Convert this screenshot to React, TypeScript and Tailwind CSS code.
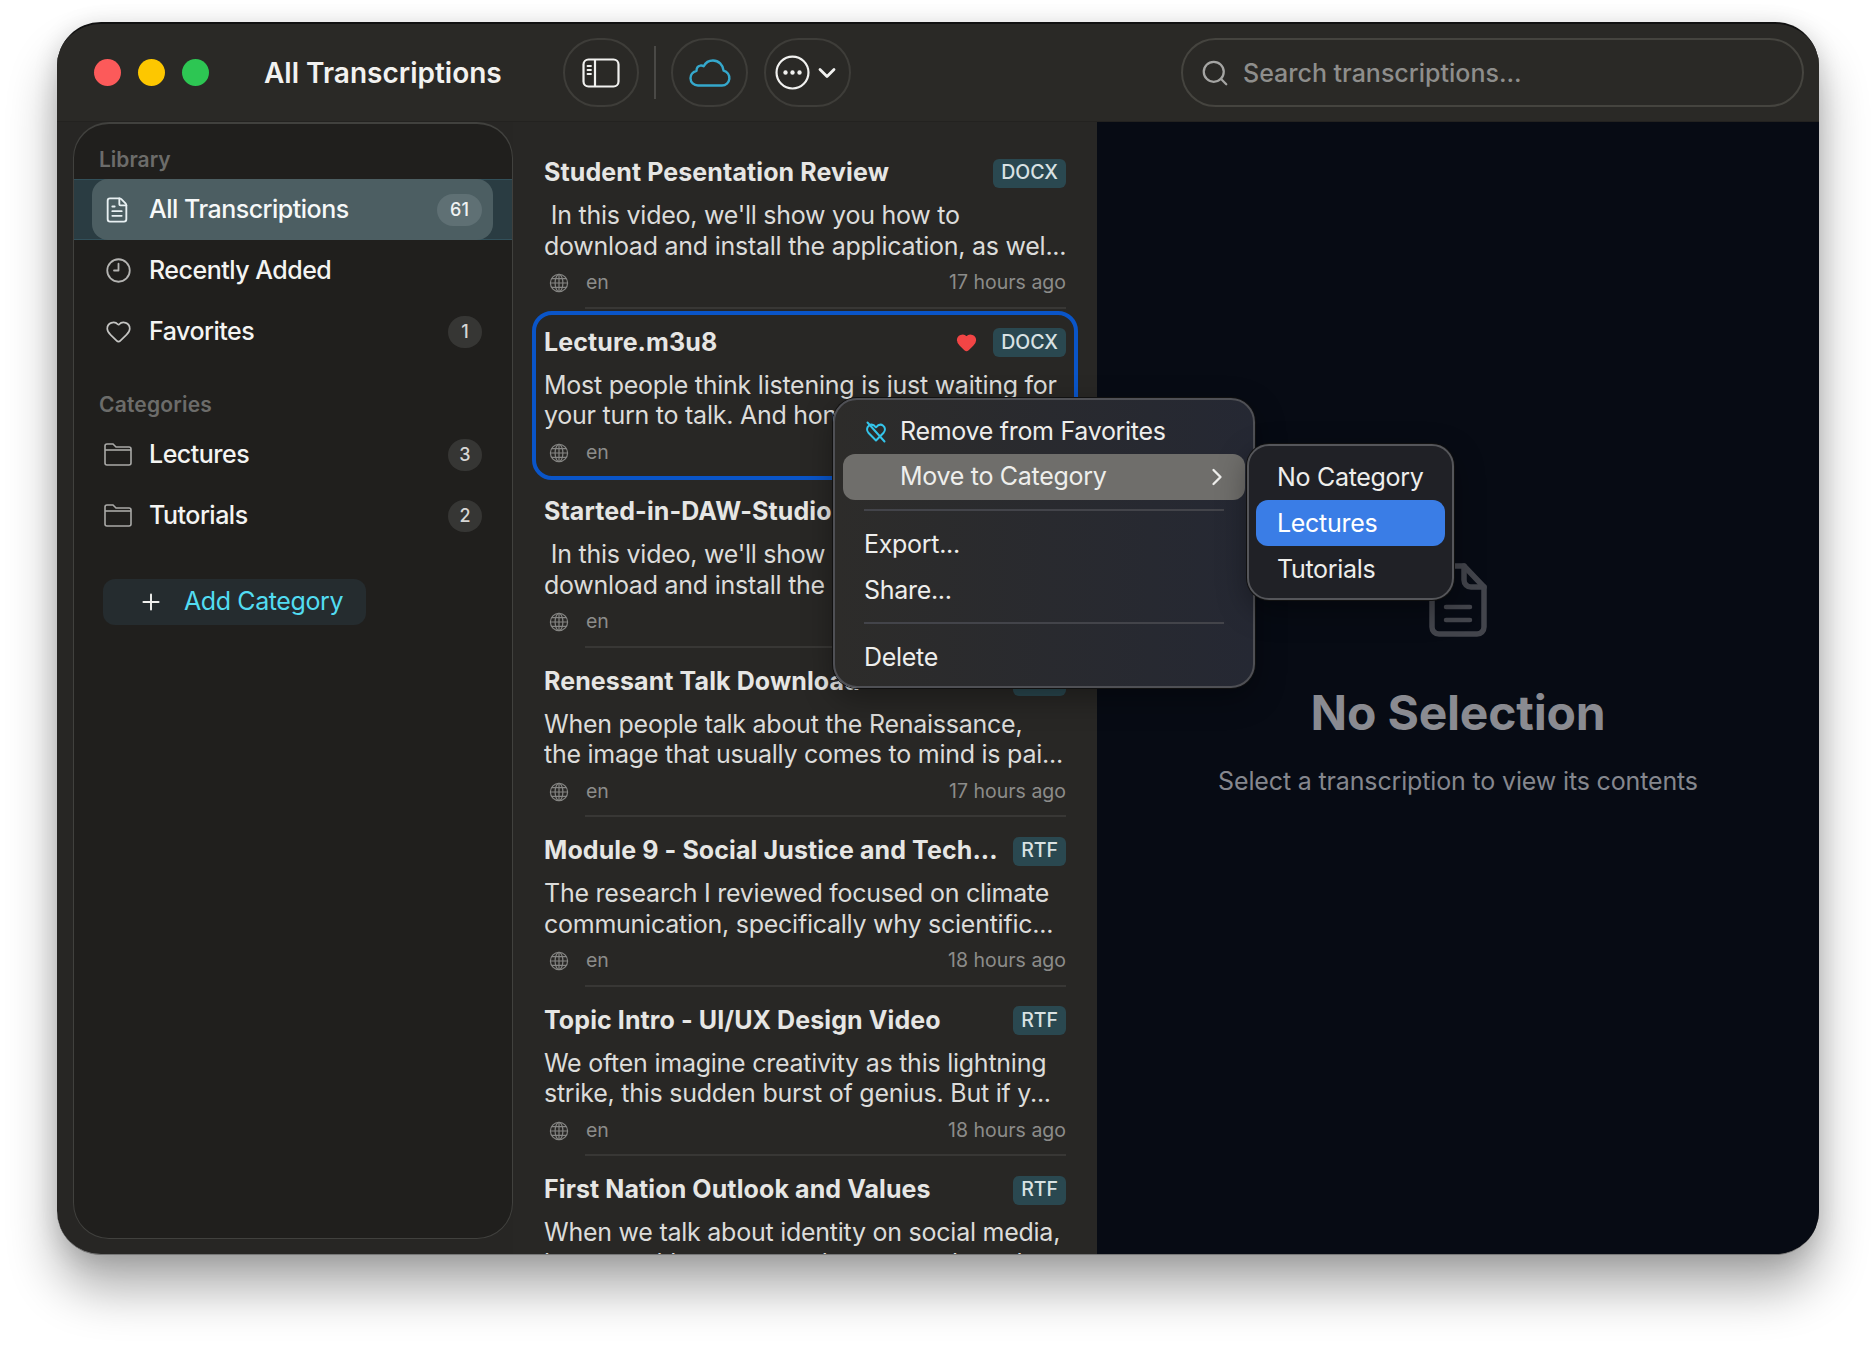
import React from 'react';
import { ChevronDown, ChevronRight, Clock9, FileText, Heart, Plus, Search } from 'lucide-react';

interface Transcription {
  title: string;
  format: string;
  text: string;
  age: string;
  favorite?: boolean;
  selected?: boolean;
}

const transcriptions: Transcription[] = [
  {
    title: 'Student Pesentation Review',
    format: 'DOCX',
    text: " In this video, we'll show you how to\ndownload and install the application, as wel...",
    age: '17 hours ago',
  },
  {
    title: 'Lecture.m3u8',
    format: 'DOCX',
    text: 'Most people think listening is just waiting for\nyour turn to talk. And honestly, most of us...',
    age: '17 hours ago',
    favorite: true,
    selected: true,
  },
  {
    title: 'Started-in-DAW-Studio',
    format: 'DOCX',
    text: " In this video, we'll show you how to\ndownload and install the application, as wel...",
    age: '17 hours ago',
  },
  {
    title: 'Renessant Talk Download',
    format: 'RTF',
    text: 'When people talk about the Renaissance,\nthe image that usually comes to mind is pai...',
    age: '17 hours ago',
  },
  {
    title: 'Module 9 - Social Justice and Tech...',
    format: 'RTF',
    text: 'The research I reviewed focused on climate\ncommunication, specifically why scientific...',
    age: '18 hours ago',
  },
  {
    title: 'Topic Intro - UI/UX Design Video',
    format: 'RTF',
    text: 'We often imagine creativity as this lightning\nstrike, this sudden burst of genius. But if y...',
    age: '18 hours ago',
  },
  {
    title: 'First Nation Outlook and Values',
    format: 'RTF',
    text: "When we talk about identity on social media,\nit starts with a presentation to people and...",
    age: '18 hours ago',
  },
];

const FolderIcon = () => (
  <svg width="28" height="23" viewBox="0 0 28 23" fill="none" stroke="#a9a9a7" strokeWidth="1.6">
    <path d="M1 5V3a2 2 0 0 1 2-2h6l3 3h13a2 2 0 0 1 2 2v14a2 2 0 0 1-2 2H3a2 2 0 0 1-2-2V5z" />
    <path d="M1 7h26" />
  </svg>
);

const GlobeIcon = () => (
  <svg width="20" height="20" viewBox="0 0 20 20" fill="none" stroke="#858583" strokeWidth="1.2">
    <circle cx="10" cy="10" r="8.6" />
    <ellipse cx="10" cy="10" rx="3.9" ry="8.6" />
    <path d="M10 1.4v17.2M1.4 10h17.2M2.6 5.7h14.8M2.6 14.3h14.8" />
  </svg>
);

const SidebarToggleIcon = () => (
  <svg width="38" height="30" viewBox="0 0 38 30" fill="none" stroke="#f1f1ef" strokeWidth="2.2" strokeLinecap="round">
    <rect x="1.5" y="1.5" width="35" height="27" rx="5" />
    <path d="M13 2v26" />
    <path d="M5.5 8h3.5M5.5 12h3.5M5.5 16h3.5" strokeWidth="1.8" />
  </svg>
);

const CloudIcon = () => (
  <svg width="42" height="28" viewBox="0 0 42 28" fill="none" stroke="#35a8cc" strokeWidth="2.4" strokeLinejoin="round">
    <path d="M9 26.5h24a7.5 7.5 0 0 0 1.6-14.8C34 6 29.6 1.5 24 1.5c-4.3 0-7.6 2.4-9.3 5.8-1.2-.7-2.3-.9-3.4-.6-2.4.5-3.8 2.6-3.8 5.1C3.8 12.9 1.5 16 1.5 19.2c0 4 3.3 7.3 7.5 7.3z" />
  </svg>
);

const MoreCircleIcon = () => (
  <svg width="35" height="35" viewBox="0 0 32 32" fill="none">
    <circle cx="16" cy="16" r="14.6" stroke="#f1f1ef" strokeWidth="2" />
    <circle cx="9.6" cy="16" r="2" fill="#f1f1ef" />
    <circle cx="16" cy="16" r="2" fill="#f1f1ef" />
    <circle cx="22.4" cy="16" r="2" fill="#f1f1ef" />
  </svg>
);

const HeartSlashIcon = () => (
  <svg width="22" height="22" viewBox="0 0 22 22" fill="none" stroke="#34c4ea" strokeWidth="2" strokeLinecap="round" strokeLinejoin="round">
    <path d="M11 19.5 3.6 12C1.4 9.7 1.6 6.4 3.8 4.7c2.1-1.6 5-1 7.2 1.6 2.2-2.6 5.1-3.2 7.2-1.6 2.2 1.7 2.4 5 .2 7.3L11 19.5z" />
    <path d="M2.5 1.5 19.5 20.5" />
  </svg>
);

const BigDocIcon = () => (
  <svg width="58" height="74" viewBox="0 0 58 74" fill="none" stroke="#43454c" strokeWidth="5.5" strokeLinecap="round" strokeLinejoin="round">
    <path d="M35 3H10a7 7 0 0 0-7 7v54a7 7 0 0 0 7 7h38a7 7 0 0 0 7-7V24L35 3z" />
    <path d="M35 3v14a7 7 0 0 0 7 7h13" />
    <path d="M17 44h24M17 57h24" strokeWidth="4.5" />
  </svg>
);

const CountBadge = ({ value, active }: { value: number; active?: boolean }) => (
  <span
    className={
      active
        ? 'flex h-[32px] w-[45px] items-center justify-center rounded-full bg-[#5f7074] text-[18px] font-medium text-[#f0f2f2]'
        : 'flex h-[32px] min-w-[34px] items-center justify-center rounded-full bg-[#363634] px-[10px] text-[18px] font-medium text-[#d6d6d4]'
    }
  >
    {value}
  </span>
);

const SidebarRow = ({ icon, label, count }: { icon: React.ReactNode; label: string; count?: number }) => (
  <div className="flex h-[61px] items-center pl-[30px] pr-[30px]">
    <span className="flex w-[28px] items-center justify-center">{icon}</span>
    <span className="ml-[17px] flex-1 text-[25px] font-medium tracking-[-0.5px] text-[#f4f4f2]">{label}</span>
    {count !== undefined && <CountBadge value={count} />}
  </div>
);

const Sidebar = () => (
  <aside className="ml-[16px] mb-[15px] flex w-[440px] shrink-0 flex-col rounded-[36px] border border-t-2 border-[#41413e] bg-[#201f1d] pt-[21px]">
    <div className="pl-[25px] text-[21px] font-semibold leading-[30px] text-[#6c6c6a]">Library</div>
    <div className="mt-[4px] h-[61px] border-y border-[#32505a] bg-[#2a3c42] pl-[18px]">
      <div className="-my-px flex h-[61px] w-[401px] items-center rounded-[16px] bg-[#4c5e62] pl-[11px] pr-[11px]">
        <FileText size={28} strokeWidth={1.6} className="text-[#e8f0f2]" />
        <span className="ml-[18px] flex-1 text-[25px] font-medium tracking-[-0.5px] text-[#f6f8f8]">All Transcriptions</span>
        <CountBadge value={61} active />
      </div>
    </div>
    <SidebarRow icon={<Clock9 size={27} strokeWidth={1.6} className="text-[#b4b4b2]" />} label="Recently Added" />
    <SidebarRow icon={<Heart size={27} strokeWidth={1.5} className="text-[#c4c4c2]" />} label="Favorites" count={1} />
    <div className="mt-[28px] pl-[25px] text-[21px] font-semibold leading-[30px] tracking-[0.2px] text-[#6c6c6a]">Categories</div>
    <div className="mt-[4px]">
      <SidebarRow icon={<FolderIcon />} label="Lectures" count={3} />
      <SidebarRow icon={<FolderIcon />} label="Tutorials" count={2} />
    </div>
    <button className="ml-[29px] mt-[33px] flex h-[46px] w-[263px] items-center rounded-[12px] bg-[#252c2f] pl-[35px]">
      <Plus size={26} strokeWidth={1.8} className="text-[#f0f0ee]" />
      <span className="ml-[20px] text-[25px] font-normal tracking-[-0.4px] text-[#52dcf2]">Add Category</span>
    </button>
  </aside>
);

const TranscriptionRow = ({ item, last }: { item: Transcription; last: boolean }) => (
  <div className="relative h-[169.5px] shrink-0 pl-[31px] pr-[31px]">
    {item.selected && (
      <div className="absolute inset-x-[19px] top-[2.5px] bottom-[-2px] rounded-[20px] border-4 border-[#0a55c8]" />
    )}
    <div className="flex h-[68px] items-center justify-between">
      <span className="text-[25px] font-bold tracking-[0.1px] whitespace-nowrap text-[#e6e6e4]">{item.title}</span>
      <div className="flex items-center gap-[16px]">
        {item.favorite && <Heart size={21} fill="#f24545" stroke="#f24545" />}
        <span className="flex h-[29px] items-center rounded-[6px] bg-[#2a4850] px-[8px] text-[19.5px] font-medium text-[#d9e2e3]">
          {item.format}
        </span>
      </div>
    </div>
    <p className="-mt-[7px] text-[25px] leading-[30.5px] tracking-[-0.25px] whitespace-pre text-[#dcdcda]">{item.text}</p>
    <div className="mt-[7px] flex h-[30px] items-center text-[19.5px] text-[#8c8c8a]">
      <span className="ml-[5px]">
        <GlobeIcon />
      </span>
      <span className="ml-[17px] flex-1">en</span>
      <span>{item.age}</span>
    </div>
    {!last && !item.selected && <div className="absolute bottom-0 left-[72px] right-[31px] h-[2px] bg-[#383735]" />}
  </div>
);

const MenuItem = ({ children, className }: { children: React.ReactNode; className?: string }) => (
  <div className={`flex h-[46px] items-center text-[25px] tracking-[-0.3px] text-[#eeeeec] ${className ?? ''}`}>{children}</div>
);

const ContextMenu = () => (
  <div className="absolute left-[776px] top-[374px] h-[290px] w-[422px] rounded-[24px] border-2 border-[#4f5055] bg-gradient-to-r from-[#2d2c2a] to-[#252833] px-[8px] pt-[8px] shadow-[0_0_0_1px_#111,0_10px_30px_rgba(0,0,0,0.35)]">
    <MenuItem className="pl-[22px] pt-[2px]">
      <HeartSlashIcon />
      <span className="ml-[13px]">Remove from Favorites</span>
    </MenuItem>
    <MenuItem className="justify-between rounded-[12px] bg-[#6f6e6b] pl-[57px] pr-[14px]">
      <span>Move to Category</span>
      <ChevronRight size={28} strokeWidth={2} />
    </MenuItem>
    <div className="mx-[21px] mb-[11px] mt-[9px] h-[2px] bg-[#43444a]" />
    <MenuItem className="pl-[21px]">Export...</MenuItem>
    <MenuItem className="pl-[21px]">Share...</MenuItem>
    <div className="mx-[21px] mb-[11px] mt-[8px] h-[2px] bg-[#43444a]" />
    <MenuItem className="pl-[21px]">Delete</MenuItem>
  </div>
);

const CategorySubmenu = () => (
  <div className="absolute left-[1190px] top-[420px] h-[156px] w-[207px] rounded-[22px] border-2 border-[#55565a] bg-[#202126] px-[7px] pt-[8px] shadow-[0_0_0_1px_#111,0_10px_30px_rgba(0,0,0,0.35)]">
    <MenuItem className="pl-[21px] pt-[2px]">No Category</MenuItem>
    <MenuItem className="rounded-[12px] bg-[#3a7de6] pl-[21px] pt-[1px] text-white">Lectures</MenuItem>
    <MenuItem className="pl-[21px] pt-[2px]">Tutorials</MenuItem>
  </div>
);

export default function App() {
  return (
    <div className="h-[1347px] w-[1876px] overflow-hidden bg-white pl-[57px] pt-[22px] [font-family:Inter,'Noto_Sans',sans-serif]">
      <div className="relative flex h-[1233px] w-[1762px] flex-col overflow-hidden rounded-[44px] border-t-2 border-b border-t-[#111] border-b-[#777] bg-[#272624] shadow-[0_34px_50px_rgba(0,0,0,0.32),0_4px_24px_rgba(0,0,0,0.14)]">
        <header className="flex h-[98px] shrink-0 items-center border-b border-[#232220] bg-[#2a2926] pl-[37px] pr-[15px]">
          <div className="flex gap-[17px]">
            <span className="h-[27px] w-[27px] rounded-full bg-[#fc5a5a]" />
            <span className="h-[27px] w-[27px] rounded-full bg-[#fdc700]" />
            <span className="h-[27px] w-[27px] rounded-full bg-[#2dc653]" />
          </div>
          <h1 className="ml-[55px] w-[299px] text-[28px] font-semibold text-[#f2f2f0]">All Transcriptions</h1>
          <button className="flex h-[69px] w-[76px] items-center justify-center rounded-full border-2 border-[#3e3d39]">
            <SidebarToggleIcon />
          </button>
          <div className="mx-[15px] h-[53px] w-[2px] bg-[#4a4946]" />
          <button className="flex h-[69px] w-[77px] items-center justify-center rounded-full border-2 border-[#3e3d39]">
            <CloudIcon />
          </button>
          <button className="ml-[16px] flex h-[69px] w-[87px] items-center justify-center gap-[3px] rounded-full border-2 border-[#3e3d39]">
            <MoreCircleIcon />
            <ChevronDown size={28} strokeWidth={2.4} className="text-[#f1f1ef]" />
          </button>
          <div className="ml-auto flex h-[69px] w-[623px] items-center rounded-full border-2 border-[#45443f] pl-[17px]">
            <Search size={30} strokeWidth={1.8} className="text-[#a5a5a3]" />
            <span className="ml-[13px] mt-[2px] text-[25px] font-medium text-[#8e8e8c]">Search transcriptions...</span>
          </div>
        </header>

        <div className="flex min-h-0 flex-1">
          <Sidebar />
          <section className="flex w-[584px] shrink-0 flex-col overflow-hidden bg-[#282725] pt-[17px]">
            {transcriptions.map((item, index) => (
              <TranscriptionRow key={item.title} item={item} last={index === transcriptions.length - 1} />
            ))}
          </section>
          <main className="flex flex-1 flex-col items-center bg-[#070b14] pt-[441px]">
            <BigDocIcon />
            <h2 className="mt-[41px] text-[48px] leading-[70px] font-bold tracking-[-0.2px] text-[#8a8b91]">No Selection</h2>
            <p className="mt-[15px] text-[25px] tracking-[-0.15px] text-[#85878e]">Select a transcription to view its contents</p>
          </main>
        </div>

        <ContextMenu />
        <CategorySubmenu />
      </div>
    </div>
  );
}
